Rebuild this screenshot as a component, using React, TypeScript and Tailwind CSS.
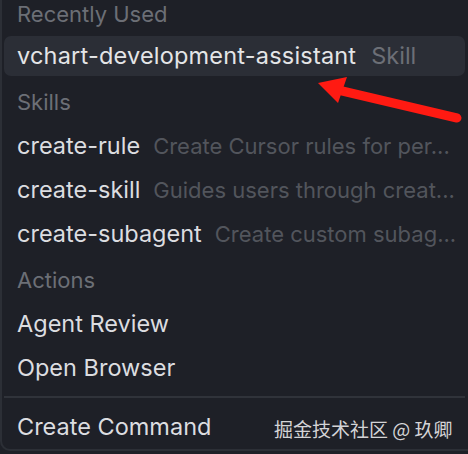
import { FC } from "react";

const font = { fontFamily: "Inter, 'Noto Sans', sans-serif" };

type Skill = { name: string; desc: string };

const skills: Skill[] = [
  { name: "create-rule", desc: "Create Cursor rules for per..." },
  { name: "create-skill", desc: "Guides users through creat..." },
  { name: "create-subagent", desc: "Create custom subag..." },
];

const actions = ["Agent Review", "Open Browser"];

const Header: FC<{ label: string; className?: string }> = ({ label, className }) => (
  <div className={`flex items-center px-[13px] text-[22px] text-[#6c6f76] ${className ?? ""}`}>
    {label}
  </div>
);

const App: FC = () => {
  return (
    <div className="relative h-[454px] w-[468px] overflow-hidden bg-[#1e2027]" style={font}>
      <div className="h-[451px] rounded-bl-[10px] border-b-2 border-l-2 border-[#2c2f36] pl-[2px] pr-[3px]">
        <Header label="Recently Used" className="h-[28px]" />
        <div className="mt-[8px] flex h-[40px] items-center gap-[15px] rounded-[7px] bg-[#2b2e36] px-[13px] text-[23.5px]">
          <span className="tracking-[0.2px] text-[#e4e5e7]">vchart-development-assistant</span>
          <span className="text-[#6c6f76]">Skill</span>
        </div>
        <Header label="Skills" className="mt-[4px] h-[44px]" />
        {skills.map((s) => (
          <div key={s.name} className="flex h-[44px] items-center gap-[13px] px-[13px] text-[23.5px]">
            <span className="shrink-0 text-[#dcdde0]">{s.name}</span>
            <span className="whitespace-nowrap text-[22px] text-[#52555c]">{s.desc}</span>
          </div>
        ))}
        <Header label="Actions" className="mt-[2px] h-[44px]" />
        {actions.map((a) => (
          <div key={a} className="flex h-[44px] items-center px-[13px] text-[23.5px] text-[#dcdde0]">
            {a}
          </div>
        ))}
        <div className="mt-[6px] border-t-2 border-[#30333a]" />
        <div className="mt-[7px] flex h-[44px] items-center px-[13px] text-[23.5px] text-[#dcdde0]">
          Create Command
        </div>
      </div>

      {/* watermark */}
      <div
        className="absolute left-[274px] top-[415px] text-[19px] text-[#d4d4d6]"
        style={{ fontFamily: "'Noto Sans CJK SC', 'Noto Sans', sans-serif" }}
      >
        掘金技术社区 @ 玖卿
      </div>

      {/* annotation arrow */}
      <svg className="absolute left-0 top-0" width="468" height="454">
        <line x1="338" y1="90" x2="457" y2="118" stroke="#ff1a12" strokeWidth="9" strokeLinecap="round" />
        <polygon points="318,83 347,77 338,103" fill="#ff1a12" />
      </svg>
    </div>
  );
};

export default App;
